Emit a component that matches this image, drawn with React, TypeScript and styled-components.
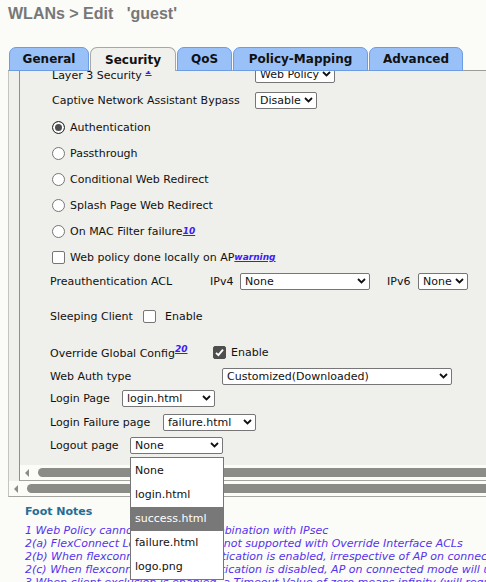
import React from 'react'
import styled, { createGlobalStyle } from 'styled-components'

const GlobalStyle = createGlobalStyle`
  html, body {
    margin: 0;
    padding: 0;
    background: #fbfbf7;
  }
  body {
    width: 486px;
    height: 582px;
    overflow: hidden;
    font-family: 'DejaVu Sans', Verdana, sans-serif;
    font-size: 11px;
    color: #111;
  }
`

const Page = styled.div`
  position: relative;
  padding-left: 8px;
  width: 900px;
`

const Title = styled.h1`
  margin: 0;
  height: 47px;
  padding-top: 5px;
  box-sizing: border-box;
  font: bold 16px 'Liberation Sans', Arial, sans-serif;
  color: #777;
  white-space: pre;
`

const TabBar = styled.div`
  display: flex;
  gap: 1px;
  height: 23px;
  padding-left: 1px;
  border-bottom: 1px solid #9c9c98;
`

const Tab = styled.div<{ $w: number; $active?: boolean }>`
  width: ${p => p.$w}px;
  height: 24px;
  box-sizing: border-box;
  display: flex;
  align-items: center;
  justify-content: center;
  border: 1px solid ${p => (p.$active ? '#a8a8a4' : '#6c9ce4')};
  border-bottom: ${p => (p.$active ? 'none' : '1px solid #6c9ce4')};
  border-radius: 7px 7px 0 0;
  background: ${p => (p.$active ? '#f0f0ec' : '#9ac1f7')};
  font-weight: bold;
  font-size: 12px;
  color: #111;
  position: relative;
  z-index: 1;
`

const OuterFrame = styled.div`
  border-left: 1px solid #c4c4c0;
  border-bottom: 1px solid #a4a4a0;
  background: #efefeb;
`

const InnerWrap = styled.div`
  padding-left: 10px;
`

const InnerFrame = styled.div`
  border-left: 1px solid #8e8e8a;
  border-bottom: 1px solid #a4a4a0;
`

const Viewport = styled.div`
  height: 394px;
  overflow: hidden;
  background: #efefeb;
  padding-left: 30px;
`

const Content = styled.div`
  margin-top: -10px;
`

const Row = styled.div<{ $h: number; $indent?: number }>`
  height: ${p => p.$h}px;
  display: flex;
  align-items: center;
  padding-left: ${p => p.$indent || 0}px;
  white-space: nowrap;
`

const Label = styled.span<{ $w?: number }>`
  display: inline-block;
  flex: none;
  width: ${p => (p.$w ? `${p.$w}px` : 'auto')};
`

const Sup = styled.a`
  font-size: 9px;
  font-weight: bold;
  font-style: italic;
  color: #3b1cf5;
  text-decoration: underline;
  vertical-align: 5px;
`

const SelectBox = styled.div<{ $w: number }>`
  width: ${p => p.$w}px;
  height: 17px;
  box-sizing: border-box;
  flex: none;
  display: flex;
  align-items: center;
  justify-content: space-between;
  padding: 0 3px 0 4px;
  border: 1px solid #767676;
  border-radius: 2px;
  background: #fff;
  color: #111;
`

const Radio = styled.span<{ $on?: boolean }>`
  width: 13px;
  height: 13px;
  box-sizing: border-box;
  flex: none;
  margin-right: 5px;
  border-radius: 50%;
  border: 1px solid ${p => (p.$on ? '#333' : '#767676')};
  background: ${p => (p.$on ? '#4e4e4e' : '#fff')};
  box-shadow: ${p => (p.$on ? 'inset 0 0 0 2px #fff' : 'none')};
`

const Check = styled.span<{ $on?: boolean; $gap: number }>`
  width: 13px;
  height: 13px;
  box-sizing: border-box;
  flex: none;
  margin-right: ${p => p.$gap}px;
  border-radius: 2px;
  border: 1px solid ${p => (p.$on ? '#4e4e4e' : '#767676')};
  background: ${p => (p.$on ? '#4e4e4e' : '#fff')};
  display: flex;
  align-items: center;
  justify-content: center;
`

const Spacer = styled.span<{ $w: number }>`
  display: inline-block;
  width: ${p => p.$w}px;
  flex: none;
`

const ScrollTrack = styled.div<{ $pad: number; $thumbGap: number }>`
  height: 15px;
  display: flex;
  align-items: center;
  padding-left: ${p => p.$pad}px;
  background: #fbfbf7;
  gap: ${p => p.$thumbGap}px;
`

const Arrow = styled.span`
  width: 0;
  height: 0;
  flex: none;
  border-top: 4px solid transparent;
  border-bottom: 4px solid transparent;
  border-right: 4px solid #8b8b87;
`

const Thumb = styled.span`
  flex: 1;
  height: 9px;
  border-radius: 5px 0 0 5px;
  background: #8b8b87;
`

const FootNotes = styled.div`
  padding: 7px 0 0 17px;
  white-space: nowrap;
`

const FootTitle = styled.div`
  font-weight: bold;
  color: #256d94;
  height: 20px;
  line-height: 15px;
`

const FootLine = styled.div`
  font-style: italic;
  color: #5533ee;
  line-height: 13px;
`

const Dropdown = styled.ul`
  position: absolute;
  left: 130px;
  top: 457px;
  width: 94px;
  margin: 0;
  padding: 1px 0 0;
  list-style: none;
  box-sizing: border-box;
  border: 1px solid #767676;
  background: #fff;
  z-index: 5;
`

const Option = styled.li<{ $sel?: boolean }>`
  height: 24px;
  line-height: 24px;
  padding-left: 4px;
  background: ${p => (p.$sel ? '#787878' : '#fff')};
  color: ${p => (p.$sel ? '#fff' : '#111')};
`

const Chevron = () => (
  <svg width="9" height="6" viewBox="0 0 9 6">
    <path d="M1 1 L4.5 4.5 L8 1" fill="none" stroke="#111" strokeWidth="1.8" />
  </svg>
)

const Tick = () => (
  <svg width="11" height="11" viewBox="0 0 11 11">
    <path d="M2 5.8 L4.4 8.2 L9 2.6" fill="none" stroke="#fff" strokeWidth="1.9" />
  </svg>
)

const Select: React.FC<{ w: number; value: string }> = ({ w, value }) => (
  <SelectBox $w={w}>
    <span>{value}</span>
    <Chevron />
  </SelectBox>
)

const tabs = [
  { name: 'General', w: 80 },
  { name: 'Security', w: 86, active: true },
  { name: 'QoS', w: 55 },
  { name: 'Policy-Mapping', w: 135 },
  { name: 'Advanced', w: 94 },
]

const radios = [
  { text: 'Authentication', on: true, h: 28 },
  { text: 'Passthrough', h: 24 },
  { text: 'Conditional Web Redirect', h: 28 },
  { text: 'Splash Page Web Redirect', h: 24 },
]

const notes = [
  '1 Web Policy cannot be used in combination with IPsec',
  '2(a) FlexConnect Local Switching is not supported with Override Interface ACLs',
  '2(b) When flexconnect local authentication is enabled, irrespective of AP on connected mode will use local authentication',
  '2(c) When flexconnect local authentication is disabled, AP on connected mode will use central authentication',
  '3 When client exclusion is enabled, a Timeout Value of zero means infinity (will require administrative override to reset excluded clients)',
]

const pages = ['None', 'login.html', 'success.html', 'failure.html', 'logo.png']

export default function App() {
  return (
    <Page>
      <GlobalStyle />
      <Title>{"WLANs > Edit   'guest'"}</Title>
      <TabBar>
        {tabs.map(t => (
          <Tab key={t.name} $w={t.w} $active={t.active}>
            {t.name}
          </Tab>
        ))}
      </TabBar>
      <OuterFrame>
        <InnerWrap>
          <InnerFrame>
            <Viewport>
              <Content>
                <Row $h={26} $indent={2}>
                  <Label $w={203}>
                    Layer 3 Security <Sup>1</Sup>
                  </Label>
                  <Select w={80} value="Web Policy" />
                </Row>
                <Row $h={26} $indent={2}>
                  <Label $w={203}>Captive Network Assistant Bypass</Label>
                  <Select w={62} value="Disable" />
                </Row>
                {radios.map(r => (
                  <Row key={r.text} $h={r.h} $indent={2}>
                    <Radio $on={r.on} />
                    {r.text}
                  </Row>
                ))}
                <Row $h={28} $indent={2}>
                  <Radio />
                  On MAC Filter failure<Sup>10</Sup>
                </Row>
                <Row $h={24} $indent={2}>
                  <Check $gap={5} />
                  Web policy done locally on AP<Sup>warning</Sup>
                </Row>
                <Row $h={24}>
                  <Label $w={160}>Preauthentication ACL</Label>
                  <Label $w={30}>IPv4</Label>
                  <Select w={130} value="None" />
                  <Spacer $w={17} />
                  <Label $w={31}>IPv6</Label>
                  <Select w={50} value="None" />
                </Row>
                <Row $h={46}>
                  <Label $w={93}>Sleeping Client</Label>
                  <Check $gap={9} />
                  Enable
                </Row>
                <Row $h={26}>
                  <Label $w={163}>
                    Override Global Config<Sup>20</Sup>
                  </Label>
                  <Check $on $gap={5}>
                    <Tick />
                  </Check>
                  Enable
                </Row>
                <Row $h={22}>
                  <Label $w={172}>Web Auth type</Label>
                  <Select w={230} value="Customized(Downloaded)" />
                </Row>
                <Row $h={22}>
                  <Label $w={72}>Login Page</Label>
                  <Select w={93} value="login.html" />
                </Row>
                <Row $h={26}>
                  <Label $w={113}>Login Failure page</Label>
                  <Select w={93} value="failure.html" />
                </Row>
                <Row $h={20}>
                  <Label $w={80}>Logout page</Label>
                  <Select w={93} value="None" />
                </Row>
              </Content>
            </Viewport>
            <ScrollTrack $pad={5} $thumbGap={9}>
              <Arrow />
              <Thumb />
            </ScrollTrack>
          </InnerFrame>
        </InnerWrap>
        <ScrollTrack $pad={5} $thumbGap={9}>
          <Arrow />
          <Thumb />
        </ScrollTrack>
      </OuterFrame>
      <FootNotes>
        <FootTitle>Foot Notes</FootTitle>
        {notes.map(n => (
          <FootLine key={n}>{n}</FootLine>
        ))}
      </FootNotes>
      <Dropdown>
        {pages.map(p => (
          <Option key={p} $sel={p === 'success.html'}>
            {p}
          </Option>
        ))}
      </Dropdown>
    </Page>
  )
}
